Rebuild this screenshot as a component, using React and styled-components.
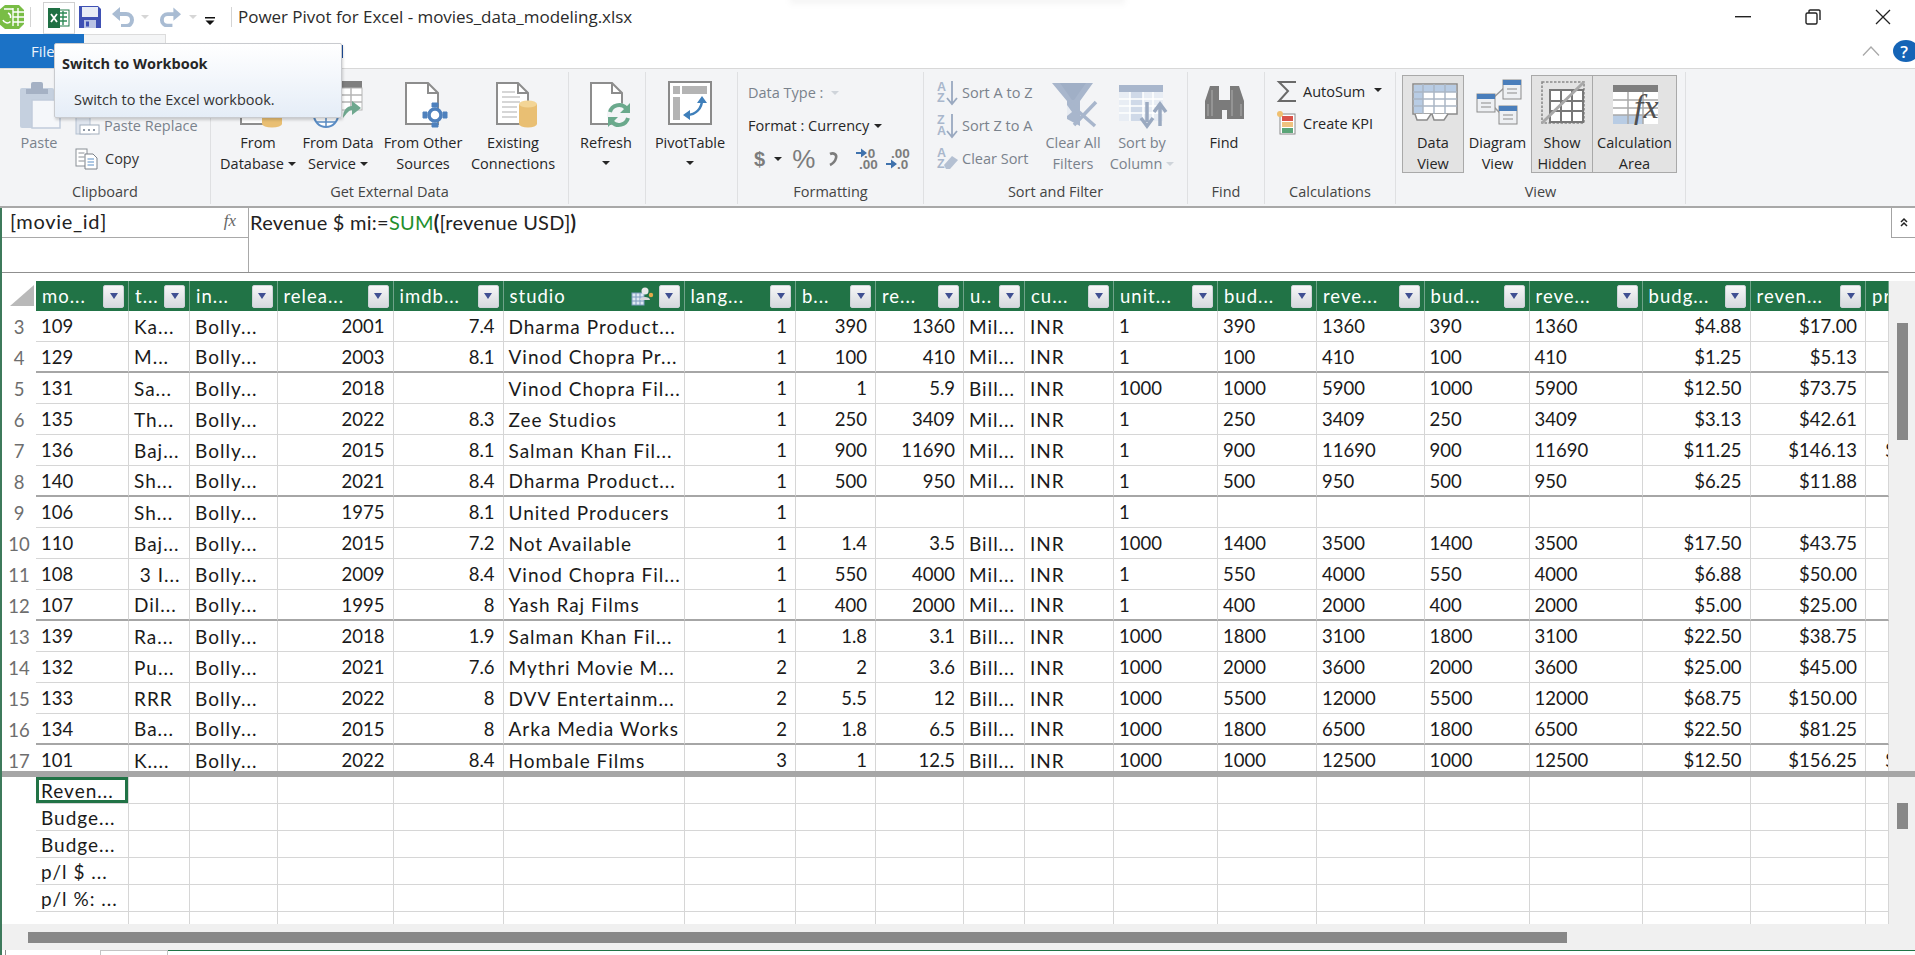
import React from "react";
import styled, { createGlobalStyle } from "styled-components";

const UI = `"Open Sans", "Noto Sans", sans-serif`;
const CELL = `Lato, "Liberation Sans", sans-serif`;
const GREEN = "#217346";
const COLS = [93, 61, 87.5, 116, 110, 181, 111.5, 80, 88, 61, 89, 104, 99, 107.6, 105, 113, 108, 115.5, 23];
const TEMPLATE = `34px ${COLS.map((c) => c + "px").join(" ")}`;

const Global = createGlobalStyle`
  * { box-sizing: border-box; }
  html, body { margin: 0; padding: 0; width: 1915px; height: 955px; overflow: hidden; background: #fff; }
  #root { width: 1915px; height: 955px; }
`;

const Page = styled.div`
  position: relative; width: 1915px; height: 955px; display: flex; flex-direction: column;
  font-family: ${UI}; color: #262626; background: #fff; overflow: hidden;
`;

/* title bar */
const TitleBar = styled.div`height: 34px; display: flex; align-items: center; flex: none;`;
const QatSep = styled.div`width: 1px; height: 20px; background: #d4d4d4; margin: 0 ${(p) => p.$r ?? 12}px 0 ${(p) => p.$l ?? 6}px;`;
const QatBox = styled.div`
  width: 32px; height: 32px; margin-top: 2px; border: 1px solid #d0d0d0; border-bottom-color: #e4e4e4; display: flex; align-items: center; justify-content: center;
`;
const QatIcon = styled.svg`display: block; flex: none; margin-left: ${(p) => p.$ml ?? 0}px;`;
const Title = styled.div`font-size: 17px; letter-spacing: -0.03px; color: #2b2b2b; white-space: nowrap; margin-bottom: 2px;`;
const WinControls = styled.div`margin-left: auto; display: flex; align-items: center; padding-right: 24px; gap: 54px;`;

/* tabs */
const TabRow = styled.div`height: 34px; display: flex; flex: none; align-items: stretch;`;
const FileTab = styled.div`
  width: 84px; background: #1b72c6; color: #eaf3fb; font-size: 15px; padding: 7px 0 0 31px;
`;
const HomeTab = styled.div`width: 82px; background: #f4f5f6; border: 1px solid #dcdcdc; border-bottom: 0; border-left: 0;`;
const TabStub = styled.div`width: 2px; height: 13px; background: #1f4f9e; margin: 11px 0 0 175px;`;
const TabRight = styled.div`margin-left: auto; display: flex; align-items: center; gap: 13px; padding-bottom: 0;`;
const Help = styled.div`
  width: 26px; height: 22px; margin-right: -4px; border-radius: 50% ; background: #1564b6; color: #fff; font-size: 17px; font-weight: 600;
  display: flex; align-items: center; justify-content: center; padding-right: 4px;
`;

/* ribbon */
const Ribbon = styled.div`
  height: 140px; flex: none; display: flex; background: #f3f4f6; border-top: 1px solid #d8d8d8; border-bottom: 2px solid #a8a8a8; padding-bottom: 1px;
`;
const Group = styled.div`
  width: ${(p) => p.$w}px; flex: none; display: flex; flex-direction: column; margin: 3px 0 1px; border-right: 1px solid #dfe0e2;
`;
const GroupBody = styled.div`flex: 1; display: flex; padding-left: ${(p) => p.$pl ?? 0}px; min-height: 0;`;
const GroupLabel = styled.div`height: 24px; flex: none; text-align: center; font-size: 14.5px; color: #444; line-height: 21px; padding-top: 1px;`;
const LargeBtn = styled.div`
  width: ${(p) => p.$w}px; flex: none; display: flex; flex-direction: column; align-items: center; height: 98px; margin-top: 3px; padding-top: 4px;
  border: 1px solid ${(p) => (p.$on ? "#a9a9a9" : "transparent")}; background: ${(p) => (p.$on ? "#e3e3e3" : "transparent")};
  ${(p) => (p.$joined ? "border-left: 0;" : "")}
`;
const IconSlot = styled.svg`display: block; flex: none; width: 64px; height: 52px; margin-bottom: 0; overflow: visible;`;
const BtnLine = styled.div`
  height: 21px; line-height: 21px; font-size: 14.5px; white-space: nowrap; display: flex; align-items: center; gap: 4px;
  color: ${(p) => (p.$off ? "#7a828c" : "#262626")};
`;
const Caret = styled.span`
  display: inline-block; width: 0; height: 0; flex: none; margin: ${(p) => p.$m ?? "0"};
  border-left: 4px solid transparent; border-right: 4px solid transparent; border-top: 4px solid ${(p) => p.$c ?? "#262626"};
`;
const SmallCol = styled.div`width: ${(p) => p.$w}px; flex: none; margin-left: ${(p) => p.$ml ?? 0}px; padding-top: ${(p) => p.$pt ?? 4}px; display: flex; flex-direction: column;`;
const SmallRow = styled.div`
  height: ${(p) => p.$h ?? 33}px; display: flex; align-items: center; font-size: 14.5px; white-space: nowrap; gap: ${(p) => p.$gap ?? 4}px;
  color: ${(p) => (p.$off ? "#7a828c" : "#262626")};
`;
const SmallIcon = styled.svg`display: block; flex: none; overflow: visible;`;
const FmtGlyph = styled.span`
  font-family: "Liberation Sans", sans-serif; color: #7c7c7c; font-size: ${(p) => p.$s}px; font-weight: ${(p) => p.$b ?? 700}; margin-left: ${(p) => p.$ml ?? 0}px; line-height: 20px;
`;

/* formula bar */
const Body = styled.div`flex: 1; display: flex; flex-direction: column; border-left: 2px solid #3d7a5b; min-height: 0;`;
const FormulaBar = styled.div`height: 65px; flex: none; display: flex; border-bottom: 1px solid #8f8f8f; margin-bottom: 8px;`;
const NameArea = styled.div`width: 247px; flex: none; display: flex; flex-direction: column; border-right: 1px solid #a9a9a9;`;
const NameBox = styled.div`
  height: 30px; flex: none; border-bottom: 1px solid #a9a9a9; padding: 0 8px 3px 8px; display: flex; align-items: center; justify-content: space-between;
  font-family: ${CELL}; font-size: 20px; color: #222; letter-spacing: 0.7px;
`;
const Fx = styled.span`font-family: "Liberation Serif", serif; font-style: italic; font-size: 17px; color: #666; margin-right: 4px; letter-spacing: 0;`;
const FormulaText = styled.div`flex: 1; font-family: ${CELL}; font-size: 20px; color: #222; padding: 2px 0 0 1px; line-height: 24px; letter-spacing: 0.25px; white-space: nowrap;`;
const Fn = styled.span`color: #1f8f2d;`;
const Paren = styled.span`font-weight: 700;`;
const Collapse = styled.div`
  width: 24px; height: 30px; flex: none; border: 1px solid #a3a3a3; border-right: 0; border-top: 0; display: flex; align-items: center; justify-content: center;
`;

/* grid */
const Pane = styled.div`display: flex; flex: none; height: ${(p) => p.$h}px; overflow: hidden;`;
const Table = styled.div`width: 1887px; flex: none; overflow: hidden;`;
const VScroll = styled.div`flex: 1; background: #f0f0f0; padding: ${(p) => p.$t}px 7px 0 8px;`;
const VThumb = styled.div`height: ${(p) => p.$h}px; background: #888;`;
const Row = styled.div`display: grid; grid-template-columns: ${TEMPLATE}; height: ${(p) => p.$h}px;`;
const Corner = styled.div`display: flex; align-items: flex-end; justify-content: flex-end; padding: 0 2px 5px 0;`;
const Triangle = styled.div`width: 0; height: 0; border-style: solid; border-width: 0 0 21px 24px; border-color: transparent transparent #b9b9b9 transparent;`;
const HeadCell = styled.div`
  background: ${GREEN}; color: #fff; border-right: 1px solid #6fa389; font-family: ${CELL}; font-size: 18.5px; letter-spacing: 1px;
  display: flex; align-items: center; padding: 0 4px 0 6px; white-space: nowrap; overflow: hidden; min-width: 0;
`;
const HeadText = styled.span`flex: 1; min-width: 0; overflow: hidden;`;
const FilterBtn = styled.div`
  width: 21px; height: 23px; flex: none; border-radius: 2px; border: 1px solid #cfd3d8; background: linear-gradient(#f6f6f7, #d6d9de);
  display: flex; align-items: center; justify-content: center;
  &::after { content: ""; border-left: 4.5px solid transparent; border-right: 4.5px solid transparent; border-top: 6px solid #3f4f92; }
`;
const RowNum = styled.div`
  display: flex; align-items: center; justify-content: center; color: #6e6e6e; font-family: ${CELL}; font-size: 18.5px;
`;
const Cell = styled.div`
  border-right: 1px solid #d6d6d6; border-bottom: ${(p) => (p.$thick ? "2px solid #a6a6a6" : "1px solid #d6d6d6")};
  display: flex; align-items: center; justify-content: ${(p) => (p.$right ? "flex-end" : "flex-start")};
  font-family: ${CELL}; font-size: ${(p) => (p.$txt ? 19 : 18.5)}px; letter-spacing: ${(p) => (p.$txt ? 1 : 0)}px; color: #1a1a1a; white-space: pre; overflow: hidden; min-width: 0;
  padding: 0 ${(p) => (p.$right ? 8 : 0)}px 0 ${(p) => p.$pl ?? 5}px;
  ${(p) => (p.$selected ? `box-shadow: inset 0 0 0 3px ${GREEN};` : "")}
`;
const Splitter = styled.div`height: 6px; flex: none; background: #a6a6a6;`;
const HScroll = styled.div`height: 26px; flex: none; background: #f0f0f0; padding: 8px 0 0 26px; margin-left: 0;`;
const HThumb = styled.div`width: 1539px; height: 11px; background: #888;`;
const Sheets = styled.div`flex: 1; display: flex; align-items: stretch; padding-left: 3px;`;
const Sheet = styled.div`width: 95px; background: #fff; border-left: 1px solid #8a8a8a;`;
const Sheet2 = styled.div`width: 68px; background: #fff; border: 1px solid #c4c4c4; border-bottom: 0;`;
const SheetRest = styled.div`flex: 1; border-top: 1px solid ${GREEN};`;

/* tooltip */
const Tooltip = styled.div`
  position: absolute; left: 54px; top: 43px; width: 288px; height: 75px; border: 1px solid #c9cbcf; border-radius: 2px;
  background: linear-gradient(#ffffff, #e5edf7); box-shadow: 1px 2px 3px rgba(0,0,0,0.18); padding: 9px 0 0 7px;
`;
const TipTitle = styled.div`font-size: 14.5px; font-weight: 700; color: #262626; line-height: 21px;`;
const TipText = styled.div`font-size: 14.5px; color: #333; line-height: 21px; margin: 15px 0 0 12px;`;
const TopShadow = styled.div`
  position: absolute; left: 790px; top: -6px; width: 335px; height: 10px; background: rgba(0,0,0,0.04); filter: blur(3px);
`;

const Vb = ({ c, children }) => (
  <IconSlot viewBox={`${c - 32} 80 64 52`}>{children}</IconSlot>
);
const Sm = ({ x, y, w, h, children, ml }) => (
  <SmallIcon width={w} height={h} viewBox={`${x} ${y} ${w} ${h}`} style={ml ? { marginLeft: ml } : undefined}>{children}</SmallIcon>
);

const Doc = ({ x, w = 31, fold = 10 }) => (
  <g fill="#fff" stroke="#8d8d8d" strokeWidth="2">
    <path d={`M${x} 83H${x + w - fold}L${x + w} ${83 + fold}V124H${x}Z`} />
    <path d={`M${x + w - fold} 83V${83 + fold}H${x + w}`} fill="none" />
  </g>
);
const Cyl = ({ x, y, w, h, fill = "#e9bf73" }) => (
  <g>
    <rect x={x} y={y} width={w} height={h} fill={fill} />
    <ellipse cx={x + w / 2} cy={y} rx={w / 2} ry={3.5} fill="#f3d596" />
    <ellipse cx={x + w / 2} cy={y + h} rx={w / 2} ry={3.5} fill={fill} />
  </g>
);
const GridLines = ({ xs, ys, x1, x2, y1, y2, color }) => (
  <g stroke={color} strokeWidth="1.5">
    {xs.map((x) => <line key={x} x1={x} x2={x} y1={y1} y2={y2} />)}
    {ys.map((y) => <line key={y} x1={x1} x2={x2} y1={y} y2={y} />)}
  </g>
);

const HEAD = ["mo...", "t...", "in...", "relea...", "imdb...", "studio", "lang...", "b...", "re...", "u..", "cu...", "unit...", "bud...", "reve...", "bud...", "reve...", "budg...", "reven..."];
const RIGHT = [3, 4, 6, 7, 8, 16, 17];
const isTxt = (s) => /[A-Za-z]/.test(s);
const r = (n, id, t, y, i, s, l, b, re, u, cu, un, bu, rv, bu2, rv2, d1, d2, last = "") =>
  ({ n, cells: [id, t, "Bolly...", y, i, s, l, b, re, u, cu, un, bu, rv, bu2, rv2, d1, d2, last] });
const DATA = [
  r(3, "109", "Ka...", "2001", "7.4", "Dharma Product...", "1", "390", "1360", "Mil...", "INR", "1", "390", "1360", "390", "1360", "$4.88", "$17.00"),
  r(4, "129", "M...", "2003", "8.1", "Vinod Chopra Pr...", "1", "100", "410", "Mil...", "INR", "1", "100", "410", "100", "410", "$1.25", "$5.13"),
  r(5, "131", "Sa...", "2018", "", "Vinod Chopra Fil...", "1", "1", "5.9", "Bill...", "INR", "1000", "1000", "5900", "1000", "5900", "$12.50", "$73.75"),
  r(6, "135", "Th...", "2022", "8.3", "Zee Studios", "1", "250", "3409", "Mil...", "INR", "1", "250", "3409", "250", "3409", "$3.13", "$42.61"),
  r(7, "136", "Baj...", "2015", "8.1", "Salman Khan Fil...", "1", "900", "11690", "Mil...", "INR", "1", "900", "11690", "900", "11690", "$11.25", "$146.13", "$"),
  r(8, "140", "Sh...", "2021", "8.4", "Dharma Product...", "1", "500", "950", "Mil...", "INR", "1", "500", "950", "500", "950", "$6.25", "$11.88"),
  r(9, "106", "Sh...", "1975", "8.1", "United Producers", "1", "", "", "", "", "1", "", "", "", "", "", ""),
  r(10, "110", "Baj...", "2015", "7.2", "Not Available", "1", "1.4", "3.5", "Bill...", "INR", "1000", "1400", "3500", "1400", "3500", "$17.50", "$43.75"),
  r(11, "108", " 3 I...", "2009", "8.4", "Vinod Chopra Fil...", "1", "550", "4000", "Mil...", "INR", "1", "550", "4000", "550", "4000", "$6.88", "$50.00"),
  r(12, "107", "Dil...", "1995", "8", "Yash Raj Films", "1", "400", "2000", "Mil...", "INR", "1", "400", "2000", "400", "2000", "$5.00", "$25.00"),
  r(13, "139", "Ra...", "2018", "1.9", "Salman Khan Fil...", "1", "1.8", "3.1", "Bill...", "INR", "1000", "1800", "3100", "1800", "3100", "$22.50", "$38.75"),
  r(14, "132", "Pu...", "2021", "7.6", "Mythri Movie M...", "2", "2", "3.6", "Bill...", "INR", "1000", "2000", "3600", "2000", "3600", "$25.00", "$45.00"),
  r(15, "133", "RRR", "2022", "8", "DVV Entertainm...", "2", "5.5", "12", "Bill...", "INR", "1000", "5500", "12000", "5500", "12000", "$68.75", "$150.00"),
  r(16, "134", "Ba...", "2015", "8", "Arka Media Works", "2", "1.8", "6.5", "Bill...", "INR", "1000", "1800", "6500", "1800", "6500", "$22.50", "$81.25"),
  r(17, "101", "K....", "2022", "8.4", "Hombale Films", "3", "1", "12.5", "Bill...", "INR", "1000", "1000", "12500", "1000", "12500", "$12.50", "$156.25", "$"),
];
const THICK = new Set([4, 8, 12, 16]);
const CALC = ["Reven...", "Budge...", "Budge...", "p/l $ ...", "p/l %: ...", ""];

const AZ = ({ x, y, top, bot }) => (
  <g>
    <text x={x} y={y + 10} fontFamily="Liberation Sans" fontWeight="700" fontSize="12.5" fill="#a9b7cc">{top}</text>
    <text x={x} y={y + 21} fontFamily="Liberation Sans" fontWeight="700" fontSize="12.5" fill="#a9b7cc">{bot}</text>
  </g>
);

export default function App() {
  return (
    <Page>
      <Global />
      <TitleBar>
        <QatIcon width="24" height="24" viewBox="0 0 24 24">
          <path d="M5 0H19L24 5V19L19 24H5L-2 18V6Z" fill="#79bd45" />
          <path d="M13 3V21M18 3V21M13 7H24M13 12H24M13 17H24M4 4H13" fill="none" stroke="#fff" strokeWidth="1.4" />
          <path d="M3 15a4.5 4.5 0 0 0 7.5 1.5M8 8a4.5 4.5 0 0 1 2.5 5" stroke="#fff" strokeWidth="1.6" fill="none" />
        </QatIcon>
        <QatSep $l={6} $r={12} />
        <QatBox>
          <svg width="22" height="20" viewBox="0 0 22 20">
            <rect x="8" y="2" width="13" height="16" fill="#fff" stroke="#1f7a47" strokeWidth="1" />
            <path d="M12 5H19M12 9H19M12 13H19M15 3V17" stroke="#2e8a57" strokeWidth="1.4" />
            <rect x="0" y="0" width="12" height="20" fill="#1f6f43" />
            <path d="M3 6L9 14M9 6L3 14" stroke="#fff" strokeWidth="1.8" />
          </svg>
        </QatBox>
        <QatIcon $ml={4} width="22" height="22" viewBox="0 0 22 22">
          <path d="M0 0H19L22 3V22H0Z" fill="#3f51b4" />
          <rect x="3" y="1" width="16" height="10" fill="#e8ecf6" />
          <rect x="5" y="14" width="12" height="8" fill="#b9c3e4" />
          <rect x="7" y="15.5" width="3" height="5" fill="#3f51b4" />
        </QatIcon>
        <QatIcon $ml={10} width="24" height="20" viewBox="0 0 24 20">
          <path d="M5 7H15a6 6 0 0 1 0 12H10" fill="none" stroke="#a9bcd3" strokeWidth="4" />
          <path d="M9 0V14L1 7Z" fill="#a9bcd3" />
        </QatIcon>
        <Caret $c="#d6d6d6" $m="0 0 0 6px" />
        <QatIcon $ml={10} width="23" height="20" viewBox="0 0 24 20">
          <path d="M19 7H9a6 6 0 0 0 0 12H14" fill="none" stroke="#a9bcd3" strokeWidth="4" />
          <path d="M15 0V14L23 7Z" fill="#a9bcd3" />
        </QatIcon>
        <Caret $c="#d6d6d6" $m="0 0 0 7px" />
        <QatIcon $ml={8} width="10" height="8" viewBox="0 0 10 8" style={{ marginTop: 7 }}>
          <path d="M0 0H10V1.5H0ZM0.5 3.5H9.5L5 8Z" fill="#111" />
        </QatIcon>
        <QatSep $l={16} $r={6} />
        <Title>Power Pivot for Excel - movies_data_modeling.xlsx</Title>
        <WinControls>
          <svg width="16" height="2" viewBox="0 0 16 2"><rect width="16" height="1.4" fill="#222" /></svg>
          <svg width="16" height="16" viewBox="0 0 16 16" fill="none" stroke="#222" strokeWidth="1.4">
            <rect x="1" y="4" width="11" height="11" rx="1.5" fill="#fff" /><path d="M4 4V2.2A1.2 1.2 0 0 1 5.2 1H13.8A1.2 1.2 0 0 1 15 2.2V11" />
          </svg>
          <svg width="16" height="16" viewBox="0 0 16 16" stroke="#222" strokeWidth="1.3"><path d="M1 1L15 15M15 1L1 15" /></svg>
        </WinControls>
      </TitleBar>

      <TabRow>
        <FileTab>File</FileTab>
        <HomeTab />
        <TabStub />
        <TabRight>
          <svg width="18" height="10" viewBox="0 0 18 10" fill="none" stroke="#a9a9a9" strokeWidth="1.3"><path d="M1 9.5L9 1L17 9.5" /></svg>
          <Help>?</Help>
        </TabRight>
      </TabRow>

      <Ribbon>
        <Group $w={211}>
          <GroupBody $pl={8}>
            <LargeBtn $w={62}>
              <Vb c={39}>
                <rect x="20" y="88" width="34" height="40" rx="2" fill="#c5d0df" />
                <rect x="31" y="82" width="12" height="9" rx="2" fill="#a5b1c4" />
                <rect x="26" y="89" width="22" height="5" fill="#a5b1c4" />
                <path d="M32 100H54L60 106V128H32Z" fill="#f5f7fa" stroke="#c1ccdb" strokeWidth="1.5" />
              </Vb>
              <BtnLine $off>Paste</BtnLine>
            </LargeBtn>
            <SmallCol $w={130} $ml={5}>
              <SmallRow />
              <SmallRow $off $gap={4}>
                <Sm x={75} y={116} w={25} h={21}>
                  <rect x="76" y="118" width="14" height="17" fill="#dfe5ee" stroke="#b5c1d1" />
                  <rect x="80" y="126" width="19" height="9" fill="#fff" stroke="#a4afbd" />
                  <path d="M83 131H85M88 131H90M93 131H95" stroke="#8f99a6" strokeWidth="2" />
                </Sm>
                Paste Replace
              </SmallRow>
              <SmallRow $gap={6} style={{ color: "#333" }}>
                <Sm x={75} y={147} w={24} h={22}>
                  <rect x="76" y="148" width="11" height="17" fill="#fff" stroke="#8a8f96" />
                  <path d="M78.5 152H84.5M78.5 156H84.5M78.5 160H84.5" stroke="#8a8f96" />
                  <path d="M85 153H93L97 157V168H85Z" fill="#fff" stroke="#7a8088" />
                  <path d="M87.5 158H94M87.5 161H94M87.5 164H94" stroke="#5b8fc7" />
                </Sm>
                Copy
              </SmallRow>
            </SmallCol>
          </GroupBody>
          <GroupLabel>Clipboard</GroupLabel>
        </Group>

        <Group $w={358}>
          <GroupBody $pl={7}>
            <LargeBtn $w={80}>
              <Vb c={258}>
                <Doc x={241} w={26} />
                <Cyl x={262} y={106} w={20} h={18} />
              </Vb>
              <BtnLine>From</BtnLine>
              <BtnLine>Database<Caret /></BtnLine>
            </LargeBtn>
            <LargeBtn $w={80}>
              <Vb c={338}>
                <rect x="330" y="81" width="32" height="7" fill="#7f7f7f" />
                <rect x="330" y="88" width="32" height="22" fill="#fff" stroke="#b5b5b5" />
                <GridLines xs={[341, 351]} ys={[95, 102]} x1={330} x2={362} y1={88} y2={110} color="#b5b5b5" />
                <circle cx="326" cy="115" r="12" fill="#fff" stroke="#5a8cc4" strokeWidth="2" />
                <path d="M314 115H338M326 103V127M317 107H335M317 122H335" stroke="#5a8cc4" strokeWidth="1.5" />
                <path d="M343 118C343 110 347 106 352 106V101L361 108L352 115V110C349 110 347 113 343 118Z" fill="#6fa88f" />
              </Vb>
              <BtnLine>From Data</BtnLine>
              <BtnLine>Service<Caret /></BtnLine>
            </LargeBtn>
            <LargeBtn $w={90}>
              <Vb c={423}>
                <Doc x={406} w={32} />
                <circle cx="435" cy="115" r="6" fill="#fff" stroke="#4f81bd" strokeWidth="3.5" />
                <path d="M432 103H438V107H432ZM432 123H438V127H432ZM423 112H427V118H423ZM443 112H447V118H443Z" fill="#4f81bd" stroke="#4f81bd" strokeWidth="1" />
              </Vb>
              <BtnLine>From Other</BtnLine>
              <BtnLine>Sources</BtnLine>
            </LargeBtn>
            <LargeBtn $w={90}>
              <Vb c={513}>
                <Doc x={497} w={31} />
                <path d="M502 92H515M502 97H520M502 102H520M502 107H517M502 112H517M502 117H517" stroke="#c9c9c9" strokeWidth="1.5" />
                <Cyl x={519} y={104} w={18} h={20} />
              </Vb>
              <BtnLine>Existing</BtnLine>
              <BtnLine>Connections</BtnLine>
            </LargeBtn>
          </GroupBody>
          <GroupLabel>Get External Data</GroupLabel>
        </Group>

        <Group $w={77}>
          <GroupBody>
            <LargeBtn $w={74}>
              <Vb c={606}>
                <Doc x={591} w={31} />
                <circle cx="619" cy="115" r="12" fill="#f3f4f6" />
                <path d="M610 112A9.5 9.5 0 0 1 626 108" fill="none" stroke="#6aa98c" strokeWidth="4" />
                <path d="M628 118A9.5 9.5 0 0 1 612 122" fill="none" stroke="#6aa98c" strokeWidth="4" />
                <path d="M630 103V113H620ZM608 127V117H618Z" fill="#6aa98c" />
              </Vb>
              <BtnLine>Refresh</BtnLine>
              <BtnLine><Caret /></BtnLine>
            </LargeBtn>
          </GroupBody>
          <GroupLabel />
        </Group>

        <Group $w={92}>
          <GroupBody>
            <LargeBtn $w={88}>
              <Vb c={690}>
                <rect x="669" y="82" width="42" height="42" fill="#fff" stroke="#8a8a8a" strokeWidth="2" />
                <rect x="682" y="86" width="25" height="8" fill="#b4b4b4" />
                <rect x="673" y="86" width="7" height="8" fill="#b4b4b4" />
                <rect x="673" y="97" width="7" height="23" fill="#b4b4b4" />
                <path d="M687 115C696 115 702 108 702 100" fill="none" stroke="#3f7fba" strokeWidth="2.5" />
                <path d="M697 103L702 96L707 103ZM690 110L683 115L690 120Z" fill="#3f7fba" />
              </Vb>
              <BtnLine>PivotTable</BtnLine>
              <BtnLine><Caret /></BtnLine>
            </LargeBtn>
          </GroupBody>
          <GroupLabel />
        </Group>

        <Group $w={186}>
          <GroupBody $pl={10}>
            <SmallCol $w={170}>
              <SmallRow $off $gap={8}>Data Type :<Caret $c="#cfd4da" /></SmallRow>
              <SmallRow $gap={5}>Format : Currency<Caret /></SmallRow>
              <SmallRow $gap={0} $h={33}>
                <FmtGlyph $s={20} $ml={6}>$</FmtGlyph>
                <Caret $m="0 0 0 9px" />
                <FmtGlyph $s={26} $b={400} $ml={10}>%</FmtGlyph>
                <Sm x={827} y={152} w={11} h={16} ml={13}>
                  <path d="M829 155C833 153 836 156 835 159C834 163 831 165 829 166" fill="none" stroke="#7c7c7c" strokeWidth="2.6" />
                </Sm>
                <Sm x={855} y={147} w={24} h={23} ml={17}>
                  <text x="863" y="158" fontFamily="Liberation Sans" fontWeight="700" fontSize="13.5" fill="#7c7c7c">.0</text>
                  <text x="858" y="169" fontFamily="Liberation Sans" fontWeight="700" fontSize="13.5" fill="#7c7c7c">.00</text>
                  <path d="M855 152H860V148.5L866 153L860 157.5V154H855Z" fill="#3f72ad" />
                </Sm>
                <Sm x={887} y={147} w={24} h={23} ml={6}>
                  <text x="892" y="158" fontFamily="Liberation Sans" fontWeight="700" fontSize="13.5" fill="#7c7c7c">.00</text>
                  <text x="898" y="169" fontFamily="Liberation Sans" fontWeight="700" fontSize="13.5" fill="#7c7c7c">.0</text>
                  <path d="M887 163H892V159.5L898 164L892 168.5V165H887Z" fill="#3f72ad" />
                </Sm>
              </SmallRow>
            </SmallCol>
          </GroupBody>
          <GroupLabel>Formatting</GroupLabel>
        </Group>

        <Group $w={264}>
          <GroupBody $pl={12}>
            <SmallCol $w={104}>
              <SmallRow $off $gap={4}>
                <Sm x={936} y={79} w={22} h={25}>
                  <AZ x={937} y={80} top="A" bot="Z" />
                  <path d="M952 80V102M947 97L952 103L957 97" fill="none" stroke="#9aa9c0" strokeWidth="1.8" />
                </Sm>
                Sort A to Z
              </SmallRow>
              <SmallRow $off $gap={4}>
                <Sm x={936} y={112} w={22} h={25}>
                  <AZ x={937} y={113} top="Z" bot="A" />
                  <path d="M952 113V135M947 130L952 136L957 130" fill="none" stroke="#9aa9c0" strokeWidth="1.8" />
                </Sm>
                Sort Z to A
              </SmallRow>
              <SmallRow $off $gap={4}>
                <Sm x={936} y={145} w={22} h={25}>
                  <AZ x={937} y={146} top="A" bot="Z" />
                  <path d="M944 164L952 155L958 159L950 168H946Z" fill="#b4c0d2" />
                </Sm>
                Clear Sort
              </SmallRow>
            </SmallCol>
            <LargeBtn $w={66}>
              <Vb c={1073}>
                <path d="M1052 83H1093L1080 101V126L1067 119V101Z" fill="#a8b6cc" />
                <path d="M1060 83L1072 100H1074L1086 83Z" fill="#a0afc6" />
                <path d="M1070 104L1095 126M1096 102L1074 125" stroke="#a8b6cc" strokeWidth="3.5" />
                <path d="M1067 105L1072 112L1067 116Z" fill="#e8ecf2" />
              </Vb>
              <BtnLine $off>Clear All</BtnLine>
              <BtnLine $off>Filters</BtnLine>
            </LargeBtn>
            <LargeBtn $w={72}>
              <Vb c={1142}>
                <rect x="1119" y="85" width="44" height="7" fill="#a8b6cc" />
                <rect x="1119" y="92" width="44" height="29" fill="#e8edf4" />
                <rect x="1130" y="92" width="13" height="29" fill="#cfd9e8" />
                <GridLines xs={[1130, 1143, 1153]} ys={[99, 106, 113]} x1={1119} x2={1163} y1={92} y2={121} color="#fff" />
                <path d="M1147 102V122M1141 118L1147 126L1153 118" fill="none" stroke="#9aa9c0" strokeWidth="3.5" />
                <path d="M1160 126V106M1154 112L1160 104L1166 112" fill="none" stroke="#9aa9c0" strokeWidth="3.5" />
              </Vb>
              <BtnLine $off>Sort by</BtnLine>
              <BtnLine $off>Column<Caret $c="#cfd4da" /></BtnLine>
            </LargeBtn>
          </GroupBody>
          <GroupLabel>Sort and Filter</GroupLabel>
        </Group>

        <Group $w={77}>
          <GroupBody>
            <LargeBtn $w={72}>
              <Vb c={1224}>
                <path d="M1210 86H1219V100H1222V119H1205V101Z" fill="#7b7b7b" />
                <path d="M1230 86H1239L1244 101V119H1227V100H1230Z" fill="#7b7b7b" />
                <rect x="1222" y="100" width="5" height="10" fill="#7b7b7b" />
                <path d="M1212 90V116M1232 90V116M1208 104V116M1241 104V116" stroke="#a5a5a5" strokeWidth="1.2" />
              </Vb>
              <BtnLine>Find</BtnLine>
            </LargeBtn>
          </GroupBody>
          <GroupLabel>Find</GroupLabel>
        </Group>

        <Group $w={131}>
          <GroupBody $pl={12}>
            <SmallCol $w={115} $pt={3}>
              <SmallRow $h={32} $gap={7}>
                <Sm x={1277} y={81} w={19} h={23}>
                  <path d="M1295 84V83H1279L1288 92L1279 102H1296" fill="none" stroke="#6a6a6a" strokeWidth="2" />
                </Sm>
                AutoSum<Caret $m="0 0 2px 2px" />
              </SmallRow>
              <SmallRow $h={32} $gap={7}>
                <Sm x={1276} y={111} w={19} h={24}>
                  <rect x="1279" y="114" width="15" height="20" fill="#fff" stroke="#8a8a8a" />
                  <rect x="1281" y="116" width="11" height="5" fill="#d9534a" />
                  <rect x="1281" y="122" width="11" height="5" fill="#efc27f" />
                  <rect x="1281" y="128" width="11" height="5" fill="#5aa578" />
                  <circle cx="1279" cy="114" r="3" fill="#f0c070" />
                </Sm>
                Create KPI
              </SmallRow>
            </SmallCol>
          </GroupBody>
          <GroupLabel>Calculations</GroupLabel>
        </Group>

        <Group $w={290}>
          <GroupBody $pl={6}>
            <LargeBtn $w={62} $on>
              <Vb c={1432}>
                <rect x="1412" y="84" width="44" height="30" fill="#fff" stroke="#8b8b8b" strokeWidth="1.5" />
                <rect x="1413" y="85" width="42" height="7" fill="#b8cce4" />
                <rect x="1413" y="85" width="9" height="28" fill="#b8cce4" />
                <GridLines xs={[1422, 1433, 1444]} ys={[92, 99, 106]} x1={1412} x2={1456} y1={84} y2={114} color="#aab6c4" />
                <path d="M1414 114L1416 120H1426L1430 114M1431 114L1433 120H1443L1447 114" fill="#fff" stroke="#8b8b8b" strokeWidth="1.5" />
              </Vb>
              <BtnLine>Data</BtnLine>
              <BtnLine>View</BtnLine>
            </LargeBtn>
            <LargeBtn $w={67}>
              <Vb c={1497}>
                <path d="M1492 98L1503 88M1492 106L1499 113" stroke="#9a9a9a" strokeWidth="1.5" />
                <rect x="1502" y="80" width="18" height="19" fill="#eef0f3" stroke="#8b8b8b" />
                <rect x="1502" y="80" width="18" height="5" fill="#4a7ebb" />
                <path d="M1506 89H1516M1506 93H1516" stroke="#8b8b8b" />
                <rect x="1476" y="94" width="18" height="18" fill="#eef0f3" stroke="#8b8b8b" />
                <rect x="1476" y="94" width="18" height="5" fill="#4a7ebb" />
                <path d="M1480 103H1490M1480 107H1490" stroke="#8b8b8b" />
                <rect x="1498" y="106" width="18" height="18" fill="#eef0f3" stroke="#8b8b8b" />
                <rect x="1498" y="106" width="18" height="5" fill="#4a7ebb" />
                <path d="M1502 115H1512M1502 119H1512" stroke="#8b8b8b" />
              </Vb>
              <BtnLine>Diagram</BtnLine>
              <BtnLine>View</BtnLine>
            </LargeBtn>
            <LargeBtn $w={62} $on>
              <Vb c={1561}>
                <rect x="1541" y="82" width="42" height="41" fill="none" stroke="#8b8b8b" strokeWidth="1.6" strokeDasharray="2.5 1.5" />
                <rect x="1549" y="90" width="33" height="32" fill="#fff" stroke="#777" strokeWidth="2" />
                <path d="M1560 90V122M1571 90V122M1549 101H1582M1549 111H1582" stroke="#777" strokeWidth="2" />
                <path d="M1541 123L1583 82" stroke="#a8a8a8" strokeWidth="3" />
              </Vb>
              <BtnLine>Show</BtnLine>
              <BtnLine>Hidden</BtnLine>
            </LargeBtn>
            <LargeBtn $w={84} $on $joined>
              <Vb c={1634}>
                <rect x="1612" y="85" width="45" height="39" fill="#fff" />
                <rect x="1612" y="85" width="45" height="7" fill="#7f7f7f" />
                <rect x="1612" y="115" width="30" height="9" fill="#b8cce4" />
                <GridLines xs={[1627, 1642]} ys={[100, 108, 115]} x1={1612} x2={1657} y1={92} y2={124} color="#a9a9a9" />
                <text x="1633" y="118" fontFamily="Liberation Serif" fontStyle="italic" fontSize="34" fill="#505050">fx</text>
              </Vb>
              <BtnLine>Calculation</BtnLine>
              <BtnLine>Area</BtnLine>
            </LargeBtn>
          </GroupBody>
          <GroupLabel>View</GroupLabel>
        </Group>
      </Ribbon>

      <Body>
        <FormulaBar>
          <NameArea>
            <NameBox>[movie_id]<Fx>fx</Fx></NameBox>
          </NameArea>
          <FormulaText>Revenue $ mi:=<Fn>SUM</Fn><Paren>(</Paren>[revenue USD]<Paren>)</Paren></FormulaText>
          <Collapse>
            <svg width="10" height="11" viewBox="0 0 10 11" fill="none" stroke="#222" strokeWidth="1.5"><path d="M2 5L5 2L8 5M2 9L5 6L8 9" /></svg>
          </Collapse>
        </FormulaBar>

        <Pane $h={490}>
          <Table>
            <Row $h={30}>
              <Corner><Triangle /></Corner>
              {HEAD.map((h, i) => (
                <HeadCell key={i}>
                  <HeadText>{h}</HeadText>
                  {i === 5 && (
                    <svg width="24" height="20" viewBox="0 0 24 20" style={{ marginRight: 4 }}>
                      <rect x="1" y="7" width="12" height="12" fill="#dfe8f3" stroke="#7f9cc0" />
                      <path d="M1 11H13M1 15H13M5 7V19M9 7V19" stroke="#7f9cc0" />
                      <circle cx="14" cy="5" r="3.5" fill="#e8e8e8" />
                      <path d="M9 14C9 10 19 10 19 14Z" fill="#d8d8d8" />
                      <circle cx="20" cy="9" r="2.2" fill="#e6a94a" />
                    </svg>
                  )}
                  <FilterBtn />
                </HeadCell>
              ))}
              <HeadCell>pr</HeadCell>
            </Row>
            {DATA.map((d) => (
              <Row key={d.n} $h={31}>
                <RowNum>{d.n}</RowNum>
                {d.cells.map((c, i) => (
                  <Cell key={i} $right={RIGHT.includes(i)} $txt={isTxt(c)} $thick={THICK.has(d.n)} $pl={i === 18 ? 19 : undefined}>{c}</Cell>
                ))}
              </Row>
            ))}
          </Table>
          <VScroll $t={42}><VThumb $h={117} /></VScroll>
        </Pane>
        <Splitter />
        <Pane $h={147}>
          <Table>
            {CALC.map((c, idx) => (
              <Row key={idx} $h={idx === 5 ? 12 : 27}>
                <span />
                {COLS.map((_, i) => (
                  <Cell key={i} $txt $selected={idx === 0 && i === 0} style={idx === 5 ? { borderBottom: 0 } : undefined}>{i === 0 ? c : ""}</Cell>
                ))}
              </Row>
            ))}
          </Table>
          <VScroll $t={26}><VThumb $h={26} /></VScroll>
        </Pane>
        <HScroll><HThumb /></HScroll>
        <Sheets>
          <Sheet />
          <Sheet2 />
          <SheetRest />
        </Sheets>
      </Body>

      <TopShadow />
      <Tooltip>
        <TipTitle>Switch to Workbook</TipTitle>
        <TipText>Switch to the Excel workbook.</TipText>
      </Tooltip>
    </Page>
  );
}
